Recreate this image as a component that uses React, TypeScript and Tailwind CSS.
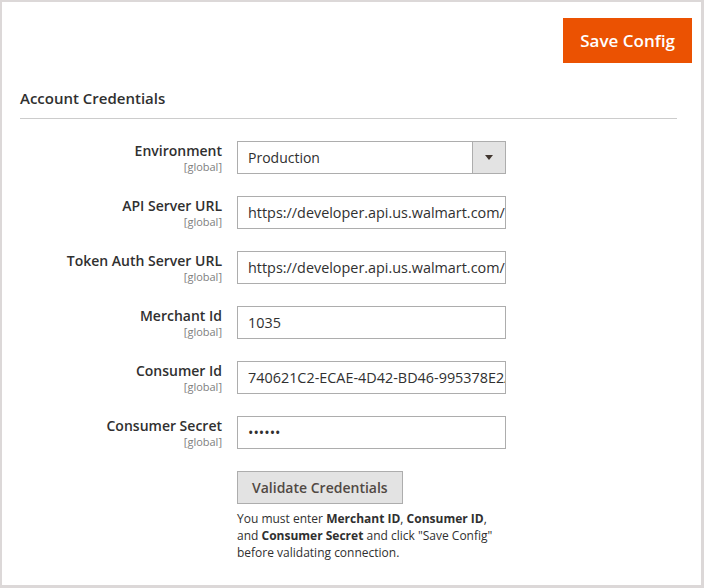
import React from "react";

const font = { fontFamily: "'Open Sans', 'Noto Sans', sans-serif" };

function Row({ label, children }: { label: string; children: React.ReactNode }) {
  return (
    <div className="flex items-start mt-[22px] first:mt-0">
      <div className="w-[202px] text-right pt-[1px]">
        <div className="text-[14px] leading-[18px] font-semibold text-[#303030]">{label}</div>
        <div className="text-[11px] leading-[13px] text-[#808080]">[global]</div>
      </div>
      <div className="ml-[15px] w-[269px]">{children}</div>
    </div>
  );
}

function TextInput({ value }: { value: string }) {
  return (
    <div className="h-[33px] border border-[#adadad] bg-white pl-[10px] flex items-center overflow-hidden whitespace-nowrap text-[14.4px] text-[#303030]">
      {value}
    </div>
  );
}

export default function App() {
  return (
    <div className="w-[704px] h-[588px] bg-white border-[#dcd8d8] border-l-2 border-t-2 border-r-[3px] border-b-[3px]" style={font}>
      <div className="flex justify-end pt-[16px] pr-[9px]">
        <button className="h-[45px] px-[17px] bg-[#eb5202] text-white text-[17px] font-semibold">
          Save Config
        </button>
      </div>
      <div className="ml-[18px] mr-[24px] mt-[25px]">
        <h2 className="text-[15px] font-semibold text-[#303030] leading-[20px] pb-[10px] border-b border-[#cccccc]">
          Account Credentials
        </h2>
      </div>
      <div className="ml-[18px] mt-[22px]">
        <Row label="Environment">
          <div className="h-[33px] border border-[#adadad] bg-white flex items-stretch">
            <div className="flex-1 px-[10px] flex items-center text-[14px] text-[#303030]">Production</div>
            <div className="w-[33px] bg-[#e3e3e3] border-l border-[#adadad] flex items-center justify-center">
              <svg width="8" height="5" viewBox="0 0 8 5">
                <path d="M0 0 H8 L4 5 Z" fill="#41362f" />
              </svg>
            </div>
          </div>
        </Row>
        <Row label="API Server URL">
          <TextInput value="https://developer.api.us.walmart.com/" />
        </Row>
        <Row label="Token Auth Server URL">
          <TextInput value="https://developer.api.us.walmart.com/" />
        </Row>
        <Row label="Merchant Id">
          <TextInput value="1035" />
        </Row>
        <Row label="Consumer Id">
          <TextInput value="740621C2-ECAE-4D42-BD46-995378E2A1F0" />
        </Row>
        <Row label="Consumer Secret">
          <TextInput value="••••••" />
        </Row>
        <div className="ml-[217px] mt-[22px]">
          <button className="h-[33px] px-[14px] bg-[#e3e3e3] border border-[#adadad] text-[14px] font-semibold text-[#514943]">
            Validate Credentials
          </button>
          <p className="mt-[6px] text-[12px] leading-[17px] text-[#303030] w-[270px]">
            You must enter <b className="font-bold">Merchant ID</b>, <b className="font-bold">Consumer ID</b>, and{" "}
            <b className="font-bold">Consumer Secret</b> and click "Save Config" before validating connection.
          </p>
        </div>
      </div>
    </div>
  );
}
